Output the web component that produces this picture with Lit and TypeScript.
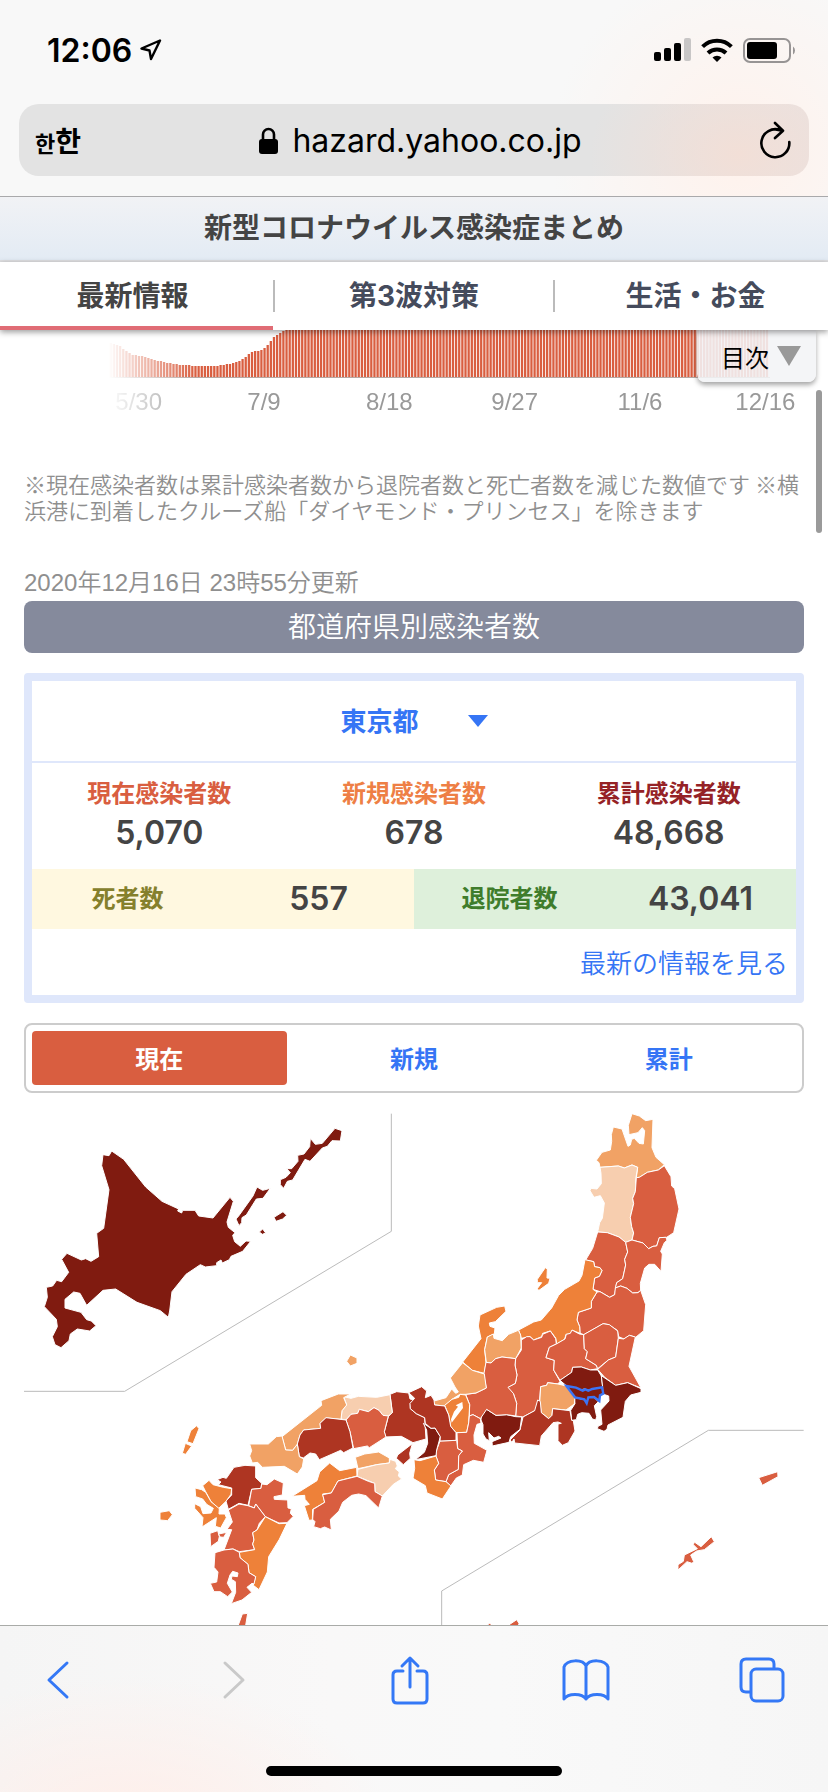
import { LitElement, html, svg, css } from "lit";
import { customElement, state } from "lit/decorators.js";
import { classMap } from "lit/directives/class-map.js";

type Level = "l1" | "l2" | "l3" | "l4" | "l5" | "l6";
type Shape = [Level, string];
interface Region { x: number; y: number; shapes: Shape[]; }

// Map regions: each is drawn in its own grid at three units per map unit.
const HOKKAIDO: Region = { x: -4, y: -12, shapes: [
  ["l6", "249,164 267,167 275,153 311,178 377,261 426,304 476,327 473,333 485,339 488,331 525,331 536,348 579,354 630,292 640,304 621,366 625,382 645,398 638,406 644,425 661,439 678,423 692,424 668,454 633,469 628,479 607,489 603,480 590,488 590,497 556,501 541,494 498,523 456,575 449,633 445,652 421,632 351,607 287,567 249,571 200,616 180,580 161,576 135,598 135,624 183,637 200,659 214,663 228,677 209,693 172,687 151,702 147,722 123,743 105,734 97,710 112,680 109,658 73,620 82,592 79,562 98,558 110,541 125,545 146,517 125,478 141,460 184,480 197,476 213,484 236,470 230,400 251,385 267,269 245,197"],
  ["l6", "711,261 728,271 751,265 729,295 709,297 679,345 666,353 665,368 657,377 648,357 656,348 699,288"],
  ["l6", "945,85 966,92 961,123 936,122 922,139 907,144 870,184 855,178 818,240 802,244 791,265 781,254 781,239 798,232 811,218 800,206 815,206 834,184 833,166 852,162 869,140 871,115 886,133 907,130"],
  ["l6", "762,352 789,335 800,346 788,357 768,364"],
  ["l6", "718,396 728,387 737,399 727,403"],
] };

const TOHOKU: Region = { x: 396, y: -12, shapes: [
  ["l2", "636,41 658,48 677,62 699,58 696,143 708,172 733,194 715,210 682,217 658,232 649,233 653,202 636,195 613,204 595,198 540,202 537,188 529,181 546,157 571,150 575,124 574,104 580,81 606,87 624,139 631,135 635,118 643,115 657,130 670,132 674,92 667,83 654,98 627,104 625,76"],
  ["l1", "540,202 595,198 613,204 636,195 653,202 648,232 646,275 638,295 641,311 631,352 635,380 641,399 636,420 617,427 597,411 562,398 533,396 539,368 547,355 553,309 541,287 522,292 510,272 513,265 531,267 544,251 543,220"],
  ["l4", "649,233 658,232 682,217 715,210 733,197 753,230 755,258 764,266 777,327 761,398 740,412 718,413 710,438 699,439 686,446 669,429 636,420 641,399 635,380 631,352 641,311 638,295 646,275"],
  ["l4", "533,396 562,398 597,411 617,427 623,456 614,478 617,495 608,536 590,548 584,584 569,592 540,575 519,568 524,534 538,529 546,512 540,503 524,500 521,485 497,480 518,445"],
  ["l4", "617,427 636,420 669,429 686,446 699,439 710,438 718,413 738,412 741,421 733,428 722,454 727,462 723,514 704,493 687,493 674,504 661,550 662,571 654,578 638,579 621,565 602,558 586,564 590,548 608,536 617,495 614,478 623,456"],
  ["l4", "531,576 540,575 569,592 584,584 586,564 602,558 621,565 638,579 654,578 662,571 677,614 671,692 647,712 629,706 612,717 596,710 592,691 566,674 550,671 492,704 480,700 479,680 471,660 475,637 514,624 514,604"],
  ["l3", "495,479 521,485 524,500 540,503 546,512 538,529 524,534 519,568 531,576 514,604 514,624 475,637 471,660 479,680 480,700 457,691 450,702 438,703 434,718 410,732 407,714 391,693 368,700 365,710 341,720 330,710 304,715 296,690 341,666 364,660 395,624 416,586 434,568 477,543 486,526"],
  ["l3", "376,503 382,507 381,534 390,535 386,550 357,571 351,567 365,548 352,548 352,538"],
] };

const CENTRAL: Region = { x: 376, y: 148, shapes: [
  ["l3", "240,165 290,142 314,138 318,154 286,185 268,189 270,199 285,204 283,222 262,231 254,269 258,307 253,340 217,331 188,306 243,236 235,198"],
  ["l2", "262,231 280,222 282,235 307,242 326,223 355,211 362,225 364,264 347,296 306,291 287,296 273,309 259,307 254,269"],
  ["l4", "364,240 380,230 390,230 401,240 425,232 428,223 451,213 467,236 469,252 448,262 438,293 463,301 461,330 480,364 474,372 443,368 440,376 422,380 419,420 408,450 369,471 347,468 350,430 340,400 322,382 346,370 351,345 345,315 347,296 364,270"],
  ["l4", "469,252 495,237 499,223 511,220 516,210 538,222 551,224 553,266 562,275 557,296 589,316 593,326 571,330 544,321 518,322 515,337 480,361 461,330 463,301 438,293 448,262"],
  ["l4", "551,224 609,191 628,194 653,213 655,235 647,291 625,300 593,326 589,316 557,296 562,275 553,266"],
  ["l4", "655,235 671,237 688,226 706,231 687,319 723,384 683,368 647,376 614,352 593,328 625,300 647,291"],
  ["l6", "480,361 515,337 518,322 544,321 571,330 593,330 604,348 608,381 580,389 570,392 553,387 541,390 500,378"],
  ["l6", "604,347 647,376 683,368 723,386 723,397 692,405 676,424 669,472 624,495 621,508 612,514 592,506 594,499 606,493 602,450 627,423 626,408 608,402 608,381"],
  ["l6", "512,451 525,431 523,412 555,420 560,430 565,412 582,412 595,425 583,437 590,470 587,480 577,477 567,460 545,458 533,463 529,479 515,481"],
  ["l2", "422,380 440,376 443,368 474,372 499,378 525,412 523,432 498,450 458,446 456,466 446,476 424,458 419,430"],
  ["l5", "413,420 421,424 424,458 446,476 456,466 458,446 510,452 515,481 520,482 525,513 505,548 487,556 474,542 474,492 484,490 474,486 459,488 424,528 419,557 344,549 342,537 336,547 330,540 360,510 369,471 404,452"],
  ["l6", "260,448 288,466 320,464 347,470 365,471 360,508 332,530 327,547 277,558 276,545 303,534 296,529 282,534 266,518 268,542 258,537 249,522 249,494 243,480 245,461"],
  ["l4", "306,291 347,296 345,315 351,345 346,370 324,382 340,400 350,430 347,468 320,464 288,466 260,448 241,476 219,464 208,468 209,434 197,403 228,399 259,384 251,345 258,307 273,309 287,296"],
  ["l2", "188,308 217,331 253,342 259,384 228,399 197,403 180,403 156,418 134,438 104,435 99,424 138,413 155,387 167,400 175,396 165,381 151,354"],
  ["l3", "134,436 156,418 176,412 180,403 197,405 209,434 206,489 200,517 168,518 152,499 146,465"],
  ["l4", "208,468 219,464 241,476 243,490 231,493 222,525 223,550 261,571 251,607 220,601 191,614 187,645 169,654 152,678 138,665 146,644 175,628 176,587 187,573 173,566 171,518 200,517 206,489"],
  ["l4", "120,543 170,541 173,566 187,573 176,587 175,628 146,644 138,665 107,660 103,630 116,610 108,590 110,570"],
  ["l6", "70,490 93,505 105,504 121,530 110,570 108,587 46,599 73,577 83,550 80,510"],
  ["l3", "42,599 60,602 108,588 116,610 103,630 107,660 138,665 153,678 127,717 81,699 76,677 39,655 44,625"],
  ["l5", "26,398 65,380 80,393 76,413 93,406 102,420 104,435 134,438 146,465 152,499 168,518 168,541 120,543 121,530 105,504 93,505 76,490 74,473 49,461 31,446 30,430 44,415"],
] };
const LAKE = "187,426 189,444 155,488 153,478 162,455 174,440 167,436";
const TOKYO = "499,378 528,383 548,392 556,388 565,392 577,387 606,382 610,401 600,406 598,423 582,411 565,412 560,430 553,418 525,412";

const WEST: Region = { x: 206, y: 228, shapes: [
  ["l5", "480,163 500,155 536,159 540,177 552,180 541,190 541,206 559,221 584,233 585,250 588,297 549,308 514,289 466,291 463,275 475,230 487,217"],
  ["l5", "547,311 539,340 541,355 520,374 499,355 503,345"],
  ["l1", "341,170 363,175 385,169 440,172 480,164 487,218 475,228 459,226 447,211 432,203 415,215 388,208 383,220 363,223 348,240 333,237 336,212 350,195"],
  ["l2", "362,162 341,173 350,195 336,212 333,238 288,234 270,250 272,265 221,270 210,285 202,313 188,331 167,330 156,290 275,196 273,182 325,162"],
  ["l4", "348,240 363,223 383,220 388,208 415,215 432,203 447,211 459,226 475,228 463,275 468,291 418,323 412,318 371,326 360,275"],
  ["l5", "270,250 288,233 348,240 360,275 369,324 341,338 332,331 268,359 257,342 240,339 220,354 208,350 202,312 210,285 221,270 272,265"],
  ["l2", "59,312 115,312 139,290 156,288 167,330 188,331 202,313 208,350 221,357 217,381 202,402 163,379 97,382 83,367 67,369 59,348 65,332"],
  ["l2", "361,45 381,54 381,70 361,78 350,64"],
  ["l2", "376,352 404,342 446,336 478,354 478,369 440,374 384,386"],
  ["l1", "384,388 440,374 478,369 480,358 497,364 502,378 496,386 508,396 505,408 515,417 490,433 457,468 435,455 434,430 381,409"],
  ["l3", "299,369 329,392 380,382 381,408 324,423 304,459 278,462 284,487 248,508 247,540 237,541 223,497 238,493 225,478 224,466 186,469 261,422 269,396"],
  ["l4", "381,409 415,424 434,430 435,455 457,468 446,504 408,467 386,462 365,466 338,487 327,513 301,538 304,570 284,561 271,566 251,560 255,545 248,538 250,508 284,487 278,464 304,459 324,423"],
] };

const KYUSHU: Region = { x: 126, y: 288, shapes: [
  ["l5", "252,202 285,196 317,198 317,233 335,250 333,265 305,268 294,316 267,310 235,328 228,303 245,285 245,264 205,254 213,246 201,239 219,232 229,235"],
  ["l3", "177,241 189,254 220,262 245,266 243,283 228,304 205,326 183,305 167,275 158,257"],
  ["l3", "135,264 155,269 167,277 183,305 208,326 207,342 225,342 229,353 212,384 196,379 199,353 156,381 159,353 134,325 134,311 152,320 159,341 183,339 190,325 170,313 158,297 137,290"],
  ["l3", "30,337 58,332 67,344 53,362 30,360"],
  ["l3", "140,77 147,86 129,131 111,125 122,92"],
  ["l3", "106,130 125,138 107,163 97,160"],
  ["l4", "335,252 351,254 373,237 400,249 397,285 372,290 373,298 413,300 414,324 424,326 421,340 430,349 411,368 387,369 346,350 317,312 313,324 296,317 305,268 333,265"],
  ["l4", "267,312 294,317 313,324 317,312 346,350 328,370 321,390 308,398 312,420 308,432 314,449 268,455 249,447 222,450 245,389 231,388 247,366 235,330"],
  ["l4", "180,400 203,392 208,410 205,424 182,440"],
  ["l4", "206,402 230,397 221,412 210,411"],
  ["l3", "346,350 387,371 411,370 388,418 356,470 352,516 327,569 310,556 317,530 297,518 294,493 270,473 268,457 314,449 308,432 312,420 308,398 321,390"],
  ["l4", "195,458 222,450 249,447 268,457 270,473 294,493 297,518 317,530 312,552 306,550 291,562 305,577 276,600 244,611 257,577 256,545 244,538 246,528 262,530 264,519 248,514 240,525 232,550 247,576 233,590 211,575 192,575 181,550 200,546 204,516 192,502"],
  ["l4", "277,642 293,640 287,676 270,720 250,720 264,678"],
] };

const OKINAWA: Region = { x: 396, y: 288, shapes: [
  ["l4", "1016,233 1073,215 1074,230 1027,256"],
  ["l4", "774,494 790,484 793,465 832,446 820,434 823,426 843,440 874,410 883,425 853,449 830,453 812,465 821,485 816,490 801,485 774,510"],
  ["l4", "250,686 290,659 297,670 290,700"],
  ["l4", "198,680 208,670 219,676 214,700"],
] };

// Height of the visible curve as [x, bar height] knots.
const KNOTS: [number, number][] = [
  [108, 35], [114, 33], [120, 31], [126, 26], [133, 22], [141, 21], [150, 18], [158, 16], [170, 14],
  [180, 12], [200, 11], [215, 11], [230, 13], [240, 16], [247, 21], [252, 25], [262, 27], [268, 32],
  [274, 40], [280, 44], [286, 48], [290, 60], [828, 60],
];
const DAY = 3.14;
const heightAt = (x: number): number => {
  const i = Math.max(1, KNOTS.findIndex((k) => k[0] >= x));
  const [x0, h0] = KNOTS[i - 1];
  const [x1, h1] = KNOTS[i];
  return h0 + ((h1 - h0) * (x - x0)) / (x1 - x0);
};
const BARS = Array.from({ length: 210 }, (_, i) => {
  const x = 767 - i * DAY;
  return { x: x - 1.2, h: Math.min(47, Math.round(heightAt(x))) };
});

@customElement("infection-chart")
class InfectionChart extends LitElement {
  static styles = css`
    :host {
      display: block;
      -webkit-mask-image: linear-gradient(90deg, transparent 108px, #000 196px);
      mask-image: linear-gradient(90deg, transparent 108px, #000 196px);
    }
    .bars { display: block; width: 100%; }
    .bar { fill: #d95e40; }
    .base { fill: #b5a8a4; }
    .days {
      display: grid; grid-template-columns: repeat(6, 1fr); margin: 0 0 0 76px; padding: 0; list-style: none;
      font-family: "Liberation Sans", sans-serif;
    }
    .day { text-align: center; font-size: 24px; line-height: 48px; color: #999; }
  `;
  render() {
    return html`
      <svg class="bars" viewBox="0 0 828 48" role="img" aria-label="現在感染者数">
        ${BARS.map((b) => svg`<rect class="bar" x=${b.x} y=${47 - b.h} width="2.3" height=${b.h}></rect>`)}
        <rect class="base" x="0" y="47" width="770" height="1"></rect>
      </svg>
      <ul class="days">
        ${["5/30", "7/9", "8/18", "9/27", "11/6", "12/16"].map((d) => html`<li class="day">${d}</li>`)}
      </ul>
    `;
  }
}

@customElement("japan-map")
class JapanMap extends LitElement {
  static styles = css`
    :host { display: block; }
    .map { display: block; width: 100%; }
    .area { stroke: #fff; stroke-width: 3; stroke-linejoin: round; }
    .l1 { fill: #f7ceaf; }
    .l2 { fill: #f1a265; }
    .l3 { fill: #ee8139; }
    .l4 { fill: #d95e40; }
    .l5 { fill: #ae3522; }
    .l6 { fill: #801b10; }
    .lake { fill: #fff; }
    .picked { fill: #801b10; stroke: #3b74f6; stroke-width: 7; stroke-linejoin: miter; }
    .frame { fill: none; stroke: #bbb; stroke-width: 3; }
  `;
  private region(r: Region, extra: unknown = null) {
    return svg`<g transform="translate(${r.x} ${r.y}) scale(0.33333)">
      ${r.shapes.map(([level, points]) => svg`<polygon class="area ${level}" points=${points}></polygon>`)}
      ${extra}
    </g>`;
  }
  render() {
    return html`
      <svg class="map" viewBox="0 0 780 560" role="img" aria-label="都道府県別感染者数">
        ${this.region(HOKKAIDO, svg`<polyline class="frame" points="12,874 314,874 1114,394 1114,41"></polyline>`)}
        ${this.region(TOHOKU)}
        ${this.region(WEST)}
        ${this.region(CENTRAL, svg`<polygon class="lake" points=${LAKE}></polygon><polygon class="picked" points=${TOKYO}></polygon>`)}
        ${this.region(KYUSHU)}
        ${this.region(OKINAWA, svg`<polyline class="frame" points="1151,91 865,91 65,573 65,800"></polyline>`)}
      </svg>
    `;
  }
}

@customElement("app-root")
class AppRoot extends LitElement {
  @state() private mode = "現在";

  static styles = css`
    :host {
      display: flex; flex-direction: column; height: 100vh; overflow: hidden; background: #fff; color: #444;
      font-family: Inter, "Noto Sans CJK JP", sans-serif;
    }
    * { box-sizing: border-box; }
    button, select { font: inherit; color: inherit; background: none; border: 0; padding: 0; margin: 0; }
    svg { display: block; }

    .chrome {
      flex: none; color: #000; border-bottom: 1px solid #a9a9ab;
      background: radial-gradient(ellipse 190px 190px at 740px 150px, #fff2ec, #fff2ec00), #f8f8f8;
    }
    .status { display: flex; align-items: center; height: 100px; padding: 0 31px 0 47px; }
    .time { font-size: 32px; font-weight: 600; margin-right: 8px; }
    .signals { display: flex; align-items: center; gap: 10px; margin-left: auto; }
    .address {
      display: flex; align-items: center; justify-content: space-between; height: 72px; margin: 4px 19px 20px;
      padding: 0 18px 0 16px; border-radius: 20px;
      background: radial-gradient(ellipse 150px 110px at 720px 50px, #f2dfd7, #f2dfd700), linear-gradient(90deg, #e3e3e3 80%, #e9e2e1);
    }
    .reader { display: flex; align-items: baseline; font-family: "Noto Sans CJK KR", sans-serif; font-weight: 700; font-size: 28px; }
    .small { font-size: 22px; }
    .url { display: flex; align-items: center; gap: 14px; font-size: 32px; }

    .title {
      flex: none; margin: 0; height: 65px; line-height: 62px; text-align: center; font-size: 28px; font-weight: 700;
      border-bottom: 2px solid #e0e0e2; background: linear-gradient(#f1f2f5, #e3ebf4);
    }
    .tabs {
      flex: none; position: relative; z-index: 1; display: grid; grid-template-columns: 273fr 282fr 273fr; height: 68px;
      background: #fff; box-shadow: 0 2px 6px rgba(0, 0, 0, 0.4);
    }
    .tab {
      display: grid; place-items: center; border-bottom: 4px solid transparent;
      font-size: 28px; font-weight: 700; color: #454b5c; text-decoration: none;
    }
    .tab.on { border-color: #e06c75; color: #444; padding-right: 8px; }
    .tab.mid { background: linear-gradient(#bbb, #bbb) left 18px / 2px 32px no-repeat, linear-gradient(#bbb, #bbb) right 18px / 2px 32px no-repeat; }
    .tab.last { padding-left: 8px; }

    .page { position: relative; flex: 1; min-height: 0; overflow: hidden; }
    .toc {
      position: absolute; top: 0; right: 12px; display: flex; align-items: center; justify-content: flex-end; gap: 8px;
      width: 119px; height: 52px; padding-right: 15px; border-radius: 0 0 8px 8px; font-size: 24px; color: #000;
      background: rgba(242, 244, 246, 0.88); box-shadow: 0 3px 5px rgba(0, 0, 0, 0.35);
    }
    .thumb { position: absolute; top: 60px; right: 6px; width: 6px; height: 143px; border-radius: 3px; background: #9a9a9a; }
    .content { padding: 0 24px; }
    .note, .updated { margin: 0; line-height: 26px; font-weight: 350; color: #8f8f8f; }
    .note { margin-top: 44px; font-size: 22px; font-family: "Noto Sans CJK JP", sans-serif; }
    .updated { margin-top: 48px; font-size: 24px; font-family: "Liberation Sans", "Noto Sans CJK JP", sans-serif; }
    .heading {
      margin: 5px 0 20px; height: 52px; line-height: 52px; border-radius: 8px; background: #858a9c; color: #fff;
      text-align: center; font-size: 28px; font-weight: 350;
    }
    .card { border: 8px solid #dfe7fb; border-radius: 4px; }
    .picker { display: flex; justify-content: center; border-bottom: 2px solid #dfe7fb; color: #3575f5; }
    .choice { display: inline-grid; align-items: center; justify-items: end; height: 80px; }
    .choice > * { grid-area: 1 / 1; }
    .select { appearance: none; padding-right: 68px; height: 80px; font-size: 26px; font-weight: 700; }
    .arrow { pointer-events: none; }
    .stats, .totals { margin: 0; display: grid; }
    .stats { grid-template-columns: repeat(3, 1fr); height: 106px; padding-top: 12px; text-align: center; }
    .label { font-size: 24px; line-height: 38px; font-weight: 700; }
    .value { margin: 0; font-size: 32px; line-height: 40px; font-weight: 600; }
    .now { color: #d95e40; }
    .new { color: #ee7f45; }
    .sum { color: #952226; }
    .totals { grid-template-columns: 1fr 1fr; }
    .total { display: grid; grid-template-columns: 1fr 1fr; align-items: center; height: 60px; text-align: center; }
    .dead { background: #fff8e0; }
    .dead .label { color: #85802c; }
    .left { background: #def0db; }
    .left .label { color: #3f7d2c; }
    .more {
      display: block; padding-right: 8px; height: 66px; line-height: 70px; text-align: right; font-size: 26px;
      font-weight: 350; color: #3575f5; text-decoration: none;
    }
    .modes {
      display: grid; grid-template-columns: repeat(3, 1fr); height: 70px; margin: 20px 0 19px; padding: 6px;
      border: 2px solid #ccc; border-radius: 8px;
    }
    .mode { border-radius: 4px; padding-bottom: 2px; font-size: 24px; font-weight: 700; color: #3575f5; }
    .mode.on { background: #d95e40; color: #fff; }

    .toolbar {
      flex: none; border-top: 1px solid #a9aba8;
      background: radial-gradient(ellipse 260px 150px at 130px 200px, #ffeee9, #ffeee900), linear-gradient(90deg, #f5f5f5, #f9f8f8 40%, #f9f9f9 60%, #f6f6f6);
    }
    .tools { display: flex; align-items: center; justify-content: space-between; padding: 28px 42px 0 34px; }
    .tool { display: grid; place-items: center; width: 48px; color: #3478f6; }
    .tool.off { color: #c9c9c9; }
    .home { width: 296px; height: 10px; margin: 60px auto 16px; border-radius: 5px; background: #000; }
    .line { fill: none; stroke: currentColor; stroke-width: 3; stroke-linecap: round; stroke-linejoin: round; }
  `;

  render() {
    return html`
      <header class="chrome">
        <div class="status">
          <span class="time">12:06</span>
          <svg width="22" height="22" viewBox="0 0 22 22">
            <path d="M20 1.500 1.500 9.500l8 2L11 20z" fill="none" stroke="#000" stroke-width="2.400" stroke-linejoin="round"></path>
          </svg>
          <div class="signals">
            <svg width="37" height="24" viewBox="0 0 37 24">
              <rect x="0" y="14" width="7" height="9" rx="2"></rect>
              <rect x="10" y="10" width="7" height="13" rx="2"></rect>
              <rect x="20" y="5" width="7" height="18" rx="2"></rect>
              <rect x="30" y="0" width="7" height="23" rx="2" fill="#c8c6c6"></rect>
            </svg>
            <svg width="32" height="24" viewBox="0 0 32 24">
              <path d="M16 24 11.500 19.500a6.500 6.500 0 0 1 9 0z"></path>
              <path fill="none" stroke="#000" stroke-width="4" d="M7 15a13 13 0 0 1 18 0M1.600 8.600a20.500 20.500 0 0 1 28.800 0"></path>
            </svg>
            <svg width="54" height="25" viewBox="0 0 54 25">
              <rect x="1" y="1" width="46" height="23" rx="6" fill="none" stroke="#979494" stroke-width="2"></rect>
              <rect x="4" y="4" width="30" height="17" rx="3"></rect>
              <path d="M50 8.500a5 5 0 0 1 0 8z" fill="#979494"></path>
            </svg>
          </div>
        </div>
        <div class="address">
          <button class="reader"><span class="small">한</span><span>한</span></button>
          <button class="url">
            <svg width="19" height="27" viewBox="0 0 19 27">
              <rect x="0" y="12" width="19" height="15" rx="3"></rect>
              <path d="M4 13V7.500a5.500 5.500 0 0 1 11 0V13" fill="none" stroke="#000" stroke-width="2.600"></path>
            </svg>
            hazard.yahoo.co.jp
          </button>
          <button aria-label="再読み込み">
            <svg width="31" height="38" viewBox="0 0 31 38">
              <path d="M20 9a14 14 0 1 0 9.300 12M15 2l8 7.700-8 7.300M15.500 8.500 22.500 9.600" fill="none" stroke="#000" stroke-width="2.600" stroke-linecap="round" stroke-linejoin="round"></path>
            </svg>
          </button>
        </div>
      </header>
      <h1 class="title">新型コロナウイルス感染症まとめ</h1>
      <nav class="tabs">
        <a class="tab on" href="#latest">最新情報</a>
        <a class="tab mid" href="#wave">第3波対策</a>
        <a class="tab last" href="#life">生活・お金</a>
      </nav>
      <main class="page">
        <infection-chart></infection-chart>
        <div class="content">
          <p class="note">※現在感染者数は累計感染者数から退院者数と死亡者数を減じた数値です ※横浜港に到着したクルーズ船「ダイヤモンド・プリンセス」を除きます</p>
          <p class="updated">2020年12月16日 23時55分更新</p>
          <h2 class="heading">都道府県別感染者数</h2>
          <section class="card">
            <div class="picker">
              <label class="choice">
                <select class="select" aria-label="都道府県">
                  <option>東京都</option>
                  <option>北海道</option>
                  <option>大阪府</option>
                </select>
                <svg class="arrow" width="20" height="12" viewBox="0 0 20 12"><path d="M0 0h20L10 12z" fill="currentColor"></path></svg>
              </label>
            </div>
            <dl class="stats">
              <div><dt class="label now">現在感染者数</dt><dd class="value">5,070</dd></div>
              <div><dt class="label new">新規感染者数</dt><dd class="value">678</dd></div>
              <div><dt class="label sum">累計感染者数</dt><dd class="value">48,668</dd></div>
            </dl>
            <dl class="totals">
              <div class="total dead"><dt class="label">死者数</dt><dd class="value">557</dd></div>
              <div class="total left"><dt class="label">退院者数</dt><dd class="value">43,041</dd></div>
            </dl>
            <a class="more" href="#latest">最新の情報を見る</a>
          </section>
          <div class="modes">
            ${["現在", "新規", "累計"].map((m) => html`
              <button class=${classMap({ mode: true, on: m === this.mode })} @click=${() => { this.mode = m; }}>${m}</button>`)}
          </div>
          <japan-map></japan-map>
        </div>
        <button class="toc">目次<svg width="24" height="20" viewBox="0 0 24 20"><path d="M0 0h24L12 20z" fill="#999"></path></svg></button>
        <div class="thumb"></div>
      </main>
      <footer class="toolbar">
        <div class="tools">
          <button class="tool" aria-label="戻る"><svg width="24" height="40" viewBox="0 0 24 40"><path class="line" d="M21 3 3 20l18 17"></path></svg></button>
          <button class="tool off" aria-label="進む"><svg width="24" height="40" viewBox="0 0 24 40"><path class="line" d="M3 3l18 17L3 37"></path></svg></button>
          <button class="tool" aria-label="共有"><svg width="38" height="52" viewBox="0 0 38 52">
            <path class="line" d="M12 17H6q-4 0-4 4v24q0 4 4 4h26q4 0 4-4V21q0-4-4-4h-6M19 33V4M11 12l8-8 8 8"></path></svg></button>
          <button class="tool" aria-label="ブックマーク"><svg width="48" height="44" viewBox="0 0 48 44">
            <path class="line" d="M2 41V9C5 1 21 1 24 8c3-7 19-7 22 1v32c-4-6-18-6-22 0-4-6-18-6-22 0zM24 8v33"></path></svg></button>
          <button class="tool" aria-label="タブ"><svg width="46" height="46" viewBox="0 0 46 46">
            <path class="line" d="M11 35H7q-5 0-5-5V7q0-5 5-5h23q5 0 5 5v4"></path><rect class="line" x="12" y="12" width="32" height="32" rx="5"></rect></svg></button>
        </div>
        <div class="home"></div>
      </footer>
    `;
  }
}
